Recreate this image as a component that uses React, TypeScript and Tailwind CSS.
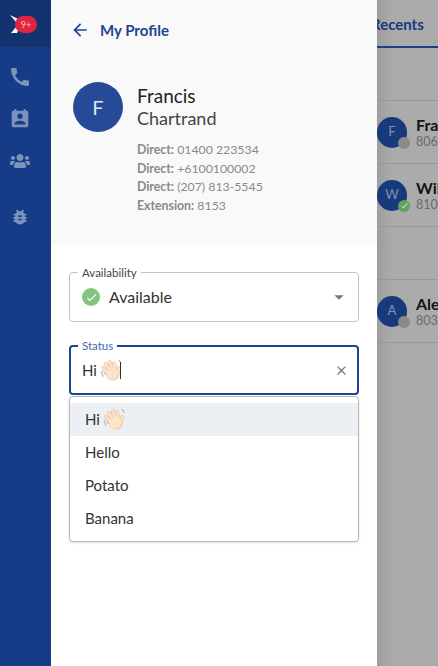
import { MdArrowBack, MdArrowDropDown, MdBugReport, MdCall, MdCheck, MdClose, MdPermContactCalendar } from "react-icons/md";
import { FaUsers } from "react-icons/fa";

const font = { fontFamily: "Lato, 'Open Sans', sans-serif" };

const fingers = "M8 13L5.500 6.500M11 11L9.500 3.500M14 11L14 3M17 12.500L18 5.500M19 16L21.500 12";

const WaveHand = () => (
  <svg width="23" height="23" viewBox="0 0 24 24" className="inline-block shrink-0">
    <path d="M1.500 13l1.500 5M4 12l1.500 4M20 1.500l2 3" stroke="#bcc2cc" strokeWidth="1.500" strokeLinecap="round" fill="none" />
    <g fill="none" strokeLinecap="round" transform="rotate(-18 13 15)">
      <path d={fingers} stroke="#e6bb94" strokeWidth="4" />
      <circle cx="13" cy="15.500" r="7" fill="#e6bb94" />
      <path d={fingers} stroke="#fce3c9" strokeWidth="3" />
      <circle cx="12.700" cy="15.300" r="6.500" fill="#fce3c9" />
    </g>
  </svg>
);

const RecentRow = ({ letter, name, num, online }: { letter: string; name: string; num: string; online?: boolean }) => (
  <div className="h-[63px] border-b border-[#979797] flex items-center gap-[9px]">
    <div className="relative w-[30px] h-[31px] shrink-0 rounded-full bg-[#173a7c] text-[#7f90b3] text-[13px] flex items-center justify-center">
      {letter}
      <span
        className={`absolute right-[-3px] bottom-[-1px] w-[12px] h-[12px] rounded-full flex items-center justify-center ${
          online ? "bg-[#5fa45f]" : "bg-[#8a8a8a]"
        }`}
      >
        {online && <MdCheck className="text-[#c9e2c9]" size={9} />}
      </span>
    </div>
    <div className="whitespace-nowrap">
      <div className="text-[16px] leading-[18px] font-bold text-[#141414]">{name}</div>
      <div className="text-[12.5px] leading-[15px] text-[#6a6a6a]">{num}</div>
    </div>
  </div>
);

const App = () => {
  const options = ["Hello", "Potato", "Banana"];
  return (
    <div className="w-[438px] h-[666px] flex overflow-hidden bg-white" style={font}>
      <aside className="w-[51px] h-full bg-[#163c87] flex flex-col items-start shrink-0">
        <div className="relative w-full h-[47px] bg-[#12336f]">
          <svg width="14" height="20" viewBox="0 0 14 20" className="mt-[14px] ml-[9px]">
            <path d="M1 1l8 4 4 5-6-2zM2 19l5-6 4-1-3 7z" fill="#fff" />
          </svg>
          <span className="absolute left-[15px] top-[16px] w-[22px] h-[17px] rounded-full bg-[#e3243f] text-[#f6c3cb] text-[9px] flex items-center justify-center">
            9+
          </span>
        </div>
        <MdCall className="mt-[18px] ml-[8px] text-[#7d93be]" size={24} />
        <MdPermContactCalendar className="mt-[19px] ml-[9px] text-[#7d93be]" size={22} />
        <FaUsers className="mt-[21px] ml-[10px] text-[#7d93be]" size={20} />
        <MdBugReport className="mt-[36px] ml-[10px] text-[#7d93be]" size={20} />
      </aside>

      <main className="w-[326px] h-full bg-white shrink-0 flex flex-col">
        <section className="h-[245px] bg-[#f9f9f9] pl-[22px] shrink-0">
          <div className="h-[60px] flex items-center gap-[10px]">
            <MdArrowBack className="ml-[-3px] text-[#1d4690]" size={20} />
            <span className="text-[15px] font-bold text-[#1d4690]">My Profile</span>
          </div>
          <div className="mt-[22px] flex gap-[14px]">
            <div className="w-[50px] h-[50px] rounded-full bg-[#264a97] text-[#dfe5f1] text-[20px] flex items-center justify-center shrink-0">
              F
            </div>
            <div className="pt-[3px]">
              <div className="text-[19px] leading-[22px] text-[#222]">Francis</div>
              <div className="text-[18px] leading-[22px] text-[#444]">Chartrand</div>
              <div className="mt-[12px] text-[12.300px] leading-[18.700px] text-[#8a8a8a]">
                <div><b>Direct:</b> 01400 223534</div>
                <div><b>Direct:</b> +6100100002</div>
                <div><b>Direct:</b> (207) 813-5545</div>
                <div><b>Extension:</b> 8153</div>
              </div>
            </div>
          </div>
        </section>

        <section className="px-[18px] pt-[27px]">
          <div className="relative h-[50px] border border-[#c4c4c4] rounded-[4px] flex items-center pl-[12px] pr-[8px] gap-[9px]">
            <span className="absolute left-[8px] top-[-7px] bg-white px-[4px] text-[11.500px] leading-[13px] text-[#444]">Availability</span>
            <span className="w-[18px] h-[18px] rounded-full bg-[#82c57c] flex items-center justify-center">
              <MdCheck className="text-white" size={13} />
            </span>
            <span className="text-[16px] text-[#333] flex-1">Available</span>
            <MdArrowDropDown className="text-[#777]" size={22} />
          </div>

          <div className="relative mt-[23px] h-[50px] border-2 border-[#1d4690] rounded-[4px] flex items-center pl-[11px] pr-[8px]">
            <span className="absolute left-[7px] top-[-8px] bg-white px-[4px] text-[11.500px] leading-[13px] text-[#3f66ad]">Status</span>
            <span className="text-[15px] text-[#333] mr-[3px]">Hi</span>
            <WaveHand />
            <span className="ml-[-3px] w-px h-[17px] bg-[#333]" />
            <MdClose className="ml-auto text-[#777]" size={15} />
          </div>

          <div className="mt-[1px] h-[146px] border border-[#b5b5b5] rounded-[4px] py-[6px] shadow-sm">
            <div className="h-[33px] bg-[#eceff4] flex items-center pl-[15px] gap-[3px] text-[15px] text-[#333]">
              Hi <WaveHand />
            </div>
            {options.map((o) => (
              <div key={o} className="h-[33px] flex items-center pl-[15px] text-[15px] text-[#333]">
                {o}
              </div>
            ))}
          </div>
        </section>
      </main>

      <div className="flex-1 h-full bg-gradient-to-r from-[#9d9d9d] to-[#ababab] to-[25%] overflow-hidden">
        <div className="h-[48px] border-b-2 border-[#1d3f7e] flex items-center">
          <span className="ml-[-6px] pt-[2px] text-[15px] font-bold text-[#163a7c]">Recents</span>
        </div>
        <div className="h-[53px] border-b border-[#979797]" />
        <RecentRow letter="F" name="Francis" num="8061234" />
        <RecentRow letter="W" name="William" num="8100123" online />
        <div className="h-[53px] border-b border-[#979797]" />
        <RecentRow letter="A" name="Alex" num="8030123" />
      </div>
    </div>
  );
};

export default App;
